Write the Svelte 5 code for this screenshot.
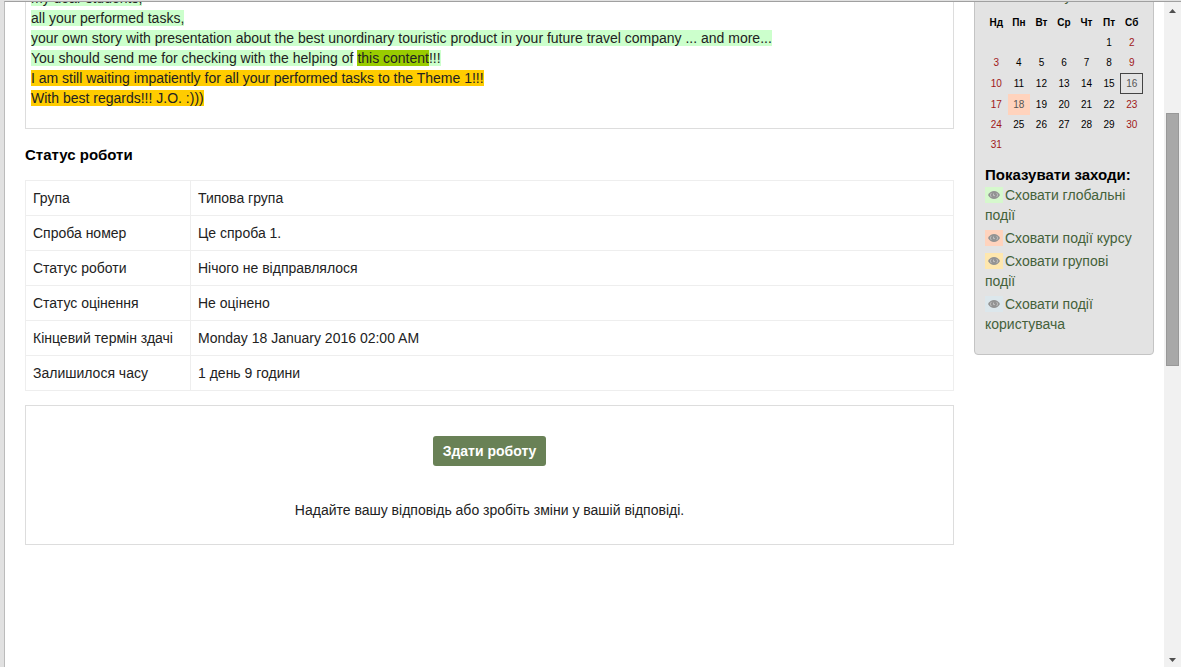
<script lang="ts">
  const status = [
    ['Група', 'Типова група'],
    ['Спроба номер', 'Це спроба 1.'],
    ['Статус роботи', 'Нічого не відправлялося'],
    ['Статус оцінення', 'Не оцінено'],
    ['Кінцевий термін здачі', 'Monday 18 January 2016 02:00 AM'],
    ['Залишилося часу', '1 день 9 години'],
  ];

  const weekdays = ['Нд', 'Пн', 'Вт', 'Ср', 'Чт', 'Пт', 'Сб'];
  const today = 16;
  const deadline = 18;

  // January 2016 starts on a Friday; 0 marks an empty cell
  const weeks = Array.from({ length: 6 }, (_, w) =>
    Array.from({ length: 7 }, (_, d) => {
      const day = w * 7 + d - 4;
      return day > 0 && day <= 31 ? day : 0;
    })
  );

  const filters = [
    { kind: 'global', label: 'Сховати глобальні події' },
    { kind: 'course', label: 'Сховати події курсу' },
    { kind: 'group', label: 'Сховати групові події' },
    { kind: 'user', label: 'Сховати події користувача' },
  ];
</script>

<div class="frame">
  <div class="page">
    <main>
      <section class="box intro">
        <p><mark>my dear students,</mark></p>
        <p><mark>all your performed tasks,</mark></p>
        <p><mark>your own story with presentation about the best unordinary touristic product in your future travel company ... and more...</mark></p>
        <p><mark>You should send me for checking with the helping of</mark> <mark class="lime">this content</mark><mark>!!!</mark></p>
        <p><mark class="amber">I am still waiting impatiently for all your performed tasks to the Theme 1!!!</mark></p>
        <p><mark class="amber">With best regards!!! J.O. :)))</mark></p>
      </section>

      <h3>Статус роботи</h3>
      <table class="status">
        <tbody>
          {#each status as [name, value] (name)}
            <tr><th scope="row">{name}</th><td>{value}</td></tr>
          {/each}
        </tbody>
      </table>

      <section class="box submit">
        <button type="button">Здати роботу</button>
        <p>Надайте вашу відповідь або зробіть зміни у вашій відповіді.</p>
      </section>
    </main>

    <aside>
      <table class="calendar">
        <caption><a href="#month">January 2016</a></caption>
        <thead>
          <tr>{#each weekdays as name (name)}<th scope="col">{name}</th>{/each}</tr>
        </thead>
        <tbody>
          {#each weeks as week, w (w)}
            <tr>
              {#each week as day, d (d)}
                <td class:weekend={d === 0 || d === 6} class:today={day === today} class:event={day === deadline}>
                  {#if day === deadline}<a href="#day">{day}</a>{:else if day}{day}{/if}
                </td>
              {/each}
            </tr>
          {/each}
        </tbody>
      </table>

      <h3>Показувати заходи:</h3>
      <ul>
        {#each filters as f (f.kind)}
          <li>
            <a href="#{f.kind}"><span class="eye {f.kind}"><svg width="12" height="8" viewBox="0 0 12 8" aria-hidden="true">
              <path d="M0 4C1.500 1.200 3.500 0 6 0s4.500 1.200 6 4C10.500 6.800 8.500 8 6 8S1.500 6.800 0 4z" fill="#939393" />
              <path d="M3.300 2.200C2 3.400 2.200 5 3.500 6M8.700 2.200c1.300 1.200 1.100 2.800-.2 3.800M5.500 2.600v2h1.500" fill="none" stroke="#ccc" stroke-width=".8" />
            </svg></span>{f.label}</a>
          </li>
        {/each}
      </ul>
    </aside>
  </div>

  <div class="scrollbar" aria-hidden="true">
    <svg width="7" height="4" viewBox="0 0 7 4"><path d="M0 4L3.500 0 7 4z" fill="#505050" /></svg>
    <div class="track"><div class="thumb"></div></div>
    <svg width="7" height="4" viewBox="0 0 7 4"><path d="M0 0L3.500 4 7 0z" fill="#505050" /></svg>
  </div>
</div>

<style>
  :global(body) { background: #fff; }
  .frame { display: flex; box-sizing: border-box; height: 100vh; overflow: hidden;
    border-top: 1px solid #e1e1e1; font: 14px/20px "Liberation Sans", Arial, sans-serif; color: #222; }
  .page, .scrollbar { border-top: 1px solid #a0a0a0; }
  .page { flex: 1; display: flex; align-items: flex-start; gap: 20px; min-width: 0; overflow: hidden;
    margin-left: 4px; padding: 0 10px 0 20px; border-left: 1px solid #bbb; box-shadow: -4px 0 #e1e1e1; }
  /* the page is scrolled: both columns begin above the visible edge */
  main, aside { margin-top: -20px; }
  main { flex: 1; min-width: 0; }
  p, h3, ul { margin: 0; padding: 0; }
  h3 { font-size: 15px; line-height: 20px; font-weight: 700; color: #000; }
  a { color: #44613a; text-decoration: none; }

  .box { border: 1px solid #ddd; }
  .intro { padding: 5px 5px 20px; margin-bottom: 16px; }
  mark { background: #cfc; color: inherit; }
  .lime { background: #9c0; }
  .amber { background: #fc0; }

  .status { width: 100%; margin: 15px 0 14px; border-collapse: collapse; }
  .status th, .status td { padding: 7px; border: 1px solid #eee; text-align: left; font-weight: 400; }
  .status th { width: 150px; white-space: nowrap; }

  .submit { padding: 30px 10px 24px; text-align: center; }
  button { display: block; height: 30px; margin: 0 auto 34px; padding: 0 10px; border: 0;
    border-radius: 3px; background: #698156; color: #fff; font: bold 14px/20px "Liberation Sans", Arial, sans-serif; }

  aside { box-sizing: border-box; flex: none; width: 180px; padding: 3px 10px 20px; background: #e3e3e3;
    border: 1px solid #c4c4c4; border-radius: 4px; }
  .calendar { width: 100%; table-layout: fixed; border-spacing: 0; margin-bottom: 10px;
    font-size: 10px; line-height: 18px; text-align: center; color: #000; }
  .calendar caption { padding-bottom: 7px; font-size: 14px; line-height: 20px; }
  .calendar th, .calendar td { box-sizing: border-box; height: 20px; padding: 0; }
  .calendar .weekend { color: #a01818; }
  .calendar .today { height: 21px; border: 1px solid #444; color: #555; }
  .calendar .event { height: 21px; background: #ffd3bd; }
  .calendar .event a { color: #555; }

  ul { padding-right: 8px; list-style: none; }
  li + li { margin-top: 3px; }
  .eye { display: inline-flex; align-items: center; justify-content: center; width: 18px; height: 16px;
    margin-right: 2px; vertical-align: text-bottom; }
  .global { background: #d6f8cd; }
  .course { background: #ffd3bd; }
  .group { background: #fee7ae; }
  .user { background: #dce7ec; }

  .scrollbar { box-sizing: border-box; flex: none; display: flex; flex-direction: column;
    align-items: center; width: 17px; padding: 7px 2px 5px; background: #f1f1f1; }
  .track { flex: 1; width: 100%; margin: 6px 0; }
  .thumb { box-sizing: border-box; height: 40%; margin-top: 94px; background: #a8a8a8; border: 1px solid #989898; }
</style>
